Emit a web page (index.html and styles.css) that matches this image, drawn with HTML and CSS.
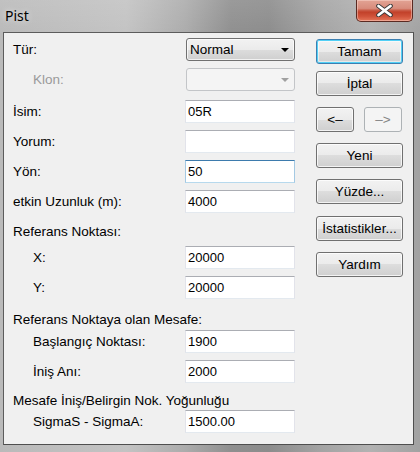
FILE: index.html
```html
<!DOCTYPE html>
<html lang="tr">
<head>
<meta charset="utf-8">
<title>Pist</title>
<link rel="stylesheet" href="styles.css">
</head>
<body>
<div class="window">
  <div class="titlebar">
    <span class="title">Pist</span>
    <div class="close">
      <svg width="17" height="13" viewBox="0 0 17 13">
        <path d="M2.5 2 L14.5 11 M14.5 2 L2.5 11" stroke="#3a3a3a" stroke-width="4.6" stroke-linecap="round"/>
        <path d="M2.5 2 L14.5 11 M14.5 2 L2.5 11" stroke="#ffffff" stroke-width="2.8" stroke-linecap="round"/>
      </svg>
    </div>
  </div>
  <div class="client">
    <div class="form">
      <div class="row">
        <span class="label">Tür:</span>
        <div class="combo"><span>Normal</span><span class="arrow"></span></div>
      </div>
      <div class="row">
        <span class="label indent disabled">Klon:</span>
        <div class="combo off"><span></span><span class="arrow"></span></div>
      </div>
      <div class="row g9">
        <span class="label">İsim:</span>
        <div class="input">05R</div>
      </div>
      <div class="row">
        <span class="label">Yorum:</span>
        <div class="input"></div>
      </div>
      <div class="row">
        <span class="label">Yön:</span>
        <div class="input focus">50</div>
      </div>
      <div class="row">
        <span class="label">etkin Uzunluk (m):</span>
        <div class="input">4000</div>
      </div>
      <div class="row">
        <span class="heading tall">Referans Noktası:</span>
      </div>
      <div class="row g3">
        <span class="label indent">X:</span>
        <div class="input">20000</div>
      </div>
      <div class="row">
        <span class="label indent">Y:</span>
        <div class="input">20000</div>
      </div>
      <div class="row short g12">
        <span class="heading">Referans Noktaya olan Mesafe:</span>
      </div>
      <div class="row g1">
        <span class="label indent">Başlangıç Noktası:</span>
        <div class="input">1900</div>
      </div>
      <div class="row">
        <span class="label indent">İniş Anı:</span>
        <div class="input">2000</div>
      </div>
      <div class="row short g9">
        <span class="heading">Mesafe İniş/Belirgin Nok. Yoğunluğu</span>
      </div>
      <div class="row g0">
        <span class="label indent">SigmaS - SigmaA:</span>
        <div class="input">1500.00</div>
      </div>
    </div>
    <div class="buttons">
      <div class="btn default">Tamam</div>
      <div class="btn b7">İptal</div>
      <div class="arrows">
        <div class="btn small">&lt;–</div>
        <div class="btn small off">–&gt;</div>
      </div>
      <div class="btn">Yeni</div>
      <div class="btn">Yüzde...</div>
      <div class="btn b12">İstatistikler...</div>
      <div class="btn">Yardım</div>
    </div>
  </div>
</div>
</body>
</html>
```

FILE: styles.css
```css
* { box-sizing: border-box; }
html, body { margin: 0; padding: 0; }
body {
  width: 420px;
  height: 452px;
  overflow: hidden;
  font-family: "Liberation Sans", Arial, sans-serif;
  font-size: 13.5px;
  color: #000;
}
.window {
  width: 420px;
  height: 452px;
  display: flex;
  flex-direction: column;
  background:
    linear-gradient(to bottom, rgba(255,255,255,0.10), rgba(255,255,255,0) 36px),
    linear-gradient(to right, #bababa 0%, #c3c3c3 30%, #acacac 44%, #8f8f8f 55%, #8c8c8c 64%, #a3a3a3 76%, #b2b2b2 88%, #a2a2a2 100%);
}
.titlebar {
  height: 32px;
  display: flex;
  align-items: flex-start;
}
.title {
  padding: 6px 0 0 5px;
  font-family: "Noto Sans", "Open Sans", sans-serif;
  font-size: 14px;
  line-height: 19px;
  color: #000;
  text-shadow: 0 0 6px rgba(255,255,255,0.8);
}
.close {
  margin-left: auto;
  margin-right: 7px;
  width: 57px;
  height: 22px;
  border: 1px solid #5a2a22;
  border-top: none;
  border-radius: 0 0 5px 5px;
  background: linear-gradient(to bottom, #e2a394 0%, #d88c7c 40%, #c95a45 50%, #c2412a 58%, #d0533a 78%, #e4765a 100%);
  box-shadow: inset 0 0 0 1px rgba(255,225,215,0.45);
  display: flex;
  align-items: center;
  justify-content: center;
}
.close svg { display: block; }
.client {
  flex: 1;
  margin: 0 6px 7px 3px;
  border: 1px solid #5c5c5c;
  border-right-color: #4f4f4f;
  border-bottom-color: #4f4f4f;
  background: #f0f0f0;
  display: flex;
  padding: 5px 0 0 9px;
}
.form { width: 282px; }
.row {
  display: flex;
  align-items: center;
  height: 23px;
  margin-top: 7px;
}
.row:first-child { margin-top: 0; }
.row.short { height: 18px; }
.row.g0 { margin-top: 0; }
.row.g1 { margin-top: 1px; }
.row.g3 { margin-top: 3px; }
.row.g9 { margin-top: 9px; }
.row.g12 { margin-top: 12px; }
.label {
  width: 172px;
  flex: none;
  white-space: nowrap;
  line-height: 23px;
}
.heading {
  white-space: nowrap;
  line-height: 18px;
}
.heading.tall { line-height: 23px; }
.indent { padding-left: 20px; }
.disabled { color: #9a9a9a; }
.input {
  width: 110px;
  height: 23px;
  flex: none;
  background: #fff;
  border: 1px solid;
  border-color: #abadb3 #e2e3ea #e3e9ef #e2e3ea;
  padding: 0 0 0 2px;
  font-size: 13px;
  line-height: 21px;
}
.input.focus {
  border-color: #3d7bad #a4c9e3 #b7d9ed #a4c9e3;
}
.combo {
  width: 109px;
  height: 23px;
  margin-left: 1px;
  flex: none;
  border: 1px solid #707070;
  border-radius: 3px;
  background: linear-gradient(to bottom, #f2f2f2 0%, #ebebeb 50%, #dddddd 50%, #cfcfcf 100%);
  box-shadow: inset 0 0 0 1px rgba(255,255,255,0.7);
  display: flex;
  align-items: center;
  justify-content: space-between;
  padding: 0 5px 0 3px;
  line-height: 21px;
}
.combo .arrow {
  width: 0;
  height: 0;
  border-left: 4px solid transparent;
  border-right: 4px solid transparent;
  border-top: 4px solid #000;
}
.combo.off {
  border-color: #c3c5c8;
  background: #f4f4f4;
  box-shadow: none;
}
.combo.off .arrow { border-top-color: #a0a0a0; }
.buttons {
  margin-left: 21px;
  margin-top: 1px;
  width: 87px;
}
.btn {
  width: 87px;
  height: 25px;
  margin-top: 11px;
  border: 1px solid #707070;
  border-radius: 3px;
  background: linear-gradient(to bottom, #f2f2f2 0%, #ebebeb 50%, #dddddd 50%, #cfcfcf 100%);
  box-shadow: inset 0 0 0 1px rgba(255,255,255,0.75);
  display: flex;
  align-items: center;
  justify-content: center;
  white-space: nowrap;
  line-height: 23px;
}
.btn.default {
  margin-top: 0;
  border-color: #3c7fb1;
  box-shadow: inset 0 0 0 1px #52d0f6, inset 0 0 0 2px rgba(255,255,255,0.5);
}
.btn.b7 { margin-top: 7px; }
.btn.b12 { margin-top: 12px; }
.arrows {
  display: flex;
  gap: 10px;
  margin-top: 11px;
}
.arrows .btn { margin-top: 0; }
.btn.small { width: 38px; }
.btn.off {
  border-color: #adb2b5;
  background: #f4f4f4;
  box-shadow: none;
  color: #838383;
}
```
